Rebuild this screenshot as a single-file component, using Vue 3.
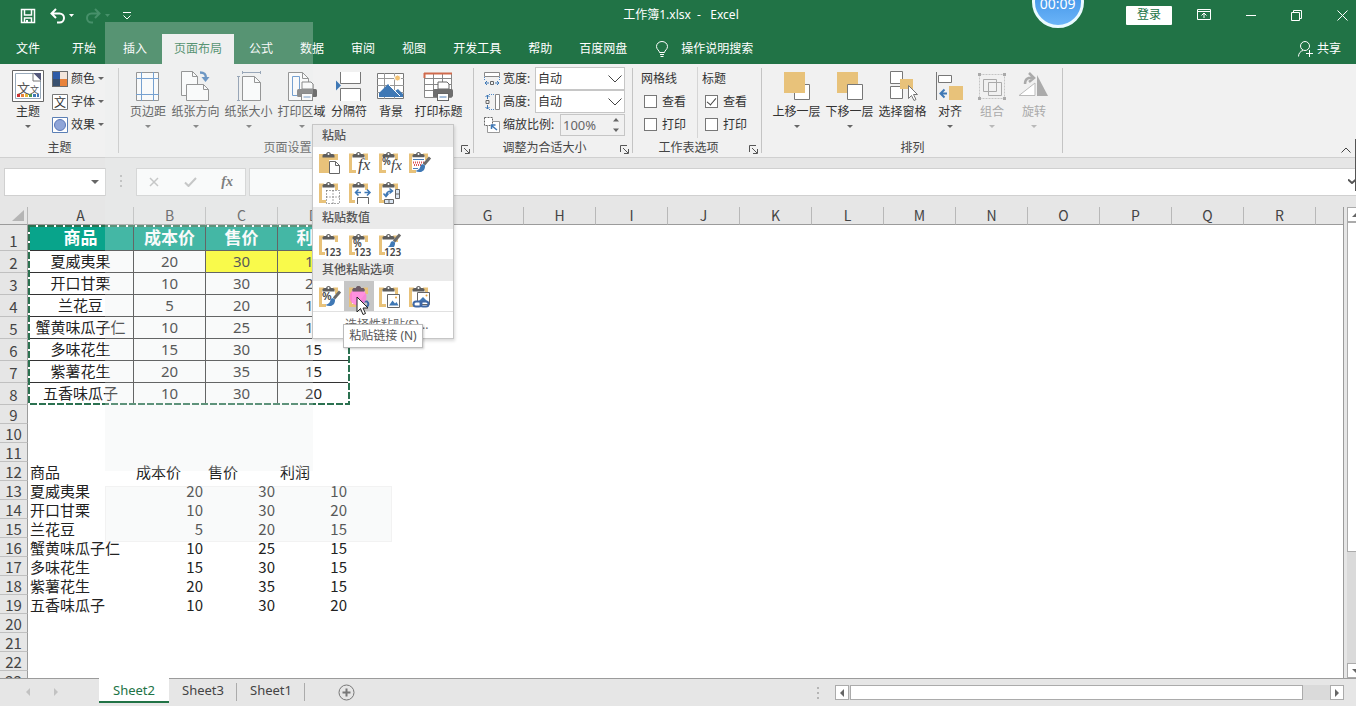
<script setup>
import { ref } from 'vue'

const clip =
  '<path d="M7 5H3.5v16.500H9M16 5h3.500v5" stroke="#e8c27a" stroke-width="3" fill="none"/><path d="M5 6.500h13V10l-8 10H5z" fill="#fff"/><path d="M5.500 7.500V5.500q0-1.500 2-1.500h1.500a2.600 2.600 0 0 1 5 0h1.500q2 0 2 1.500v2z" fill="#5d5d5d"/><circle cx="11.500" cy="4" r="1" fill="#fff"/>'
const brush =
  '<path d="M23 7.500l-6 7" stroke="#6b6b6b" stroke-width="3"/><path d="M18 15.500c-1.500-2-4-1.500-4.500.5s-1.500 4-5 5c4.500 2.500 10 .5 9.500-5.500z" fill="#3f78b5"/>'
const nums = '<rect x="8" y="15" width="17" height="9" fill="#fff"/><text x="7" y="24" font-size="10" font-weight="600" fill="#444" font-family="Noto Sans, sans-serif">123</text>'
const fx = (x, s) => `<text x="${x}" y="20" font-size="${s}" font-style="italic" fill="#444" font-family="Liberation Serif, serif">fx</text>`

const pasteSections = [
  {
    title: '粘贴',
    rows: [
      [
        { name: '粘贴', art: '<path d="M2 4h19v6H12v13H2z" fill="#e8c27a"/><path d="M5.500 7.500V5.500q0-1.500 2-1.500h1.500a2.600 2.600 0 0 1 5 0h1.500q2 0 2 1.500v2z" fill="#5d5d5d"/><circle cx="11.500" cy="4" r="1" fill="#fff"/><path d="M12.500 11.500h6l4 4v8h-10z" fill="#fff" stroke="#666"/><path d="M18.500 11.500v4h4" fill="none" stroke="#666"/>' },
        { name: '公式', art: clip + fx(11, 17) },
        { name: '公式和数字格式', art: clip + fx(14, 15) + '<text x="5" y="15" font-size="10" font-weight="600" fill="#444" font-family="Noto Sans, sans-serif">%</text>' },
        { name: '保留源格式', art: clip + '<path d="M5 7.500h13v12H5z" fill="#fff"/><path d="M6 9.500h11M6 18.500h5" stroke="#4c7fb8"/><path d="M6 12.500h11M7 15h8" stroke="#d55" stroke-width="2" stroke-dasharray="1 1"/>' + brush }
      ],
      [
        { name: '无边框', art: clip + '<path d="M9.500 10.500h13v13h-13zM9.500 17h13M16 10.500v13" fill="#fff" stroke="#555" stroke-dasharray="1 2"/>' },
        { name: '保留源列宽', art: clip + '<path d="M8 10h16v14H8z" fill="#fff"/><path d="M10.500 24v-6.500h11V24" fill="none" stroke="#666"/><path d="M9 12.500h5M22.500 12.500h-5M11.500 9.500l-3 3 3 3M20 9.500l3 3-3 3" fill="none" stroke="#3f78b5" stroke-width="1.500"/>' },
        { name: '转置', art: clip + '<path d="M8 9h16v15H8z" fill="#fff"/><path d="M18.500 9.500h4v9h-4zM18.500 14h4M7.500 19.500h9v4h-9zM12 19.500v4" fill="#dbe6f2" stroke="#666"/><path d="M9 16c0-4 2-5 6-5M12.500 8.500l3 2.500-3 2.500M6.500 13.500l2.500 3 2.500-3" fill="none" stroke="#3f78b5" stroke-width="1.500"/>' }
      ]
    ]
  },
  {
    title: '粘贴数值',
    rows: [
      [
        { name: '值', art: clip + nums },
        { name: '值和数字格式', art: clip + '<text x="6" y="15" font-size="10" font-weight="600" fill="#444" font-family="Noto Sans, sans-serif">%</text>' + nums },
        { name: '值和源格式', art: clip + '<g transform="translate(0 -5)">' + brush + '</g>' + nums }
      ]
    ]
  },
  {
    title: '其他粘贴选项',
    rows: [
      [
        { name: '格式', art: clip + '<text x="5" y="16" font-size="11" font-weight="600" fill="#444" font-family="Noto Sans, sans-serif">%</text>' + brush },
        { name: '粘贴链接', active: true, art: clip + '<path d="M12 17.500h8a3 3 0 0 1 0 5h-8" fill="none" stroke="#3f68a5" stroke-width="2"/><circle cx="11" cy="13" r="8.500" fill="#ff7ddb" fill-opacity=".85"/><path d="M5.500 7.500V5.500q0-1.500 2-1.500h1.500a2.600 2.600 0 0 1 5 0h1.500q2 0 2 1.500v2z" fill="#6d5a66"/>' },
        { name: '图片', art: clip + '<path d="M10.500 10.500h12v13h-12z" fill="#fff" stroke="#666"/><path d="M12 21.500l3.500-5 2.500 3 1.500-1.500 2 3.500z" fill="#3f78b5"/><circle cx="19" cy="13.500" r="1" fill="#e8a33a"/>' },
        { name: '链接的图片', art: clip + '<path d="M10.500 8.500h12v12h-12z" fill="#fff" stroke="#666"/><path d="M12 17l4-4 5 5" fill="#3f78b5"/><circle cx="19.500" cy="11.500" r="1" fill="#e8a33a"/><rect x="6.500" y="17.500" width="8" height="5" rx="2.500" fill="#fff" stroke="#3f68a5" stroke-width="2"/><rect x="13.500" y="17.500" width="8" height="5" rx="2.500" fill="none" stroke="#3f68a5" stroke-width="2"/>' }
      ]
    ]
  }
]

const printer = (x, y) =>
  `<g transform="translate(${x} ${y})"><path d="M5 0h9l2 2v5H5z" fill="#fff" stroke="#666"/><rect x="0" y="7" width="20" height="8" rx="1.500" fill="#6e6e6e"/><rect x="4.500" y="11.500" width="11" height="7" fill="#fff" stroke="#666"/><path d="M6.500 15h7" stroke="#4c7fb8"/></g>`

const pageSetup = [
  { label: '页边距', caret: true, art: '<path d="M4.500 2.500h22v28h-22z" fill="#fff" stroke="#777"/><path d="M9.500 2v29M21.500 2v29M4 8.500h23M4 24.500h23" stroke="#4c86c6"/>' },
  { label: '纸张方向', caret: true, art: '<path d="M1.500 1.500h11l5 5v19h-16z" fill="#fff" stroke="#777"/><path d="M12.500 1.500v5h5" fill="none" stroke="#777"/><path d="M6.500 14.500h17l5 5v11h-22z" fill="#fff" stroke="#777"/><path d="M23.500 14.500v5h5" fill="none" stroke="#777"/><path d="M20 2.500c5 0 6 2 6 6" fill="none" stroke="#3f78b5" stroke-width="2.500"/><path d="M21.500 7h8l-4 5z" fill="#3f78b5"/>' },
  { label: '纸张大小', caret: true, art: '<path d="M9.500 6.500h12l6 6v18h-18z" fill="#fff" stroke="#777"/><path d="M21.500 6.500v6h6" fill="none" stroke="#777"/><path d="M9 2.500h19M9.500 1v3M27.500 1v3M5.500 6v25M4 6.500h3M4 30.500h3" stroke="#7a8ca3"/>' },
  { label: '打印区域', caret: true, art: '<path d="M2.500 2.500h14l6 6v22h-20z" fill="#fff" stroke="#777"/><path d="M16.500 2.500v6h6" fill="none" stroke="#777"/><path d="M6.500 6.500h7v19h-7z" fill="none" stroke="#4c86c6"/>' + printer(11, 12) },
  { label: '分隔符', art: '<path d="M7.500 2v11.500h20V2M7.500 31V18.500h20V31" fill="#fff" stroke="#777"/><path d="M3 10.500l5 5-5 5z" fill="#3f78b5"/>' },
  { label: '背景', art: '<path d="M2.500 3.500h26v25h-26z" fill="#fff" stroke="#777"/><path d="M2 8.500h27M2 15.500h27M2 22.500h27M9.500 3v26M19.500 3v26" stroke="#999"/><path d="M4 27v-4l9-9 7 7 3-2 5 5v3z" fill="#3f78b5"/><path d="M14 15l11 11" stroke="#fff"/><circle cx="22.500" cy="8" r="3" fill="#f2c274" stroke="#fff"/>' },
  { label: '打印标题', art: '<path d="M1.500 3.500h27v24h-27z" fill="#fff" stroke="#888"/><path d="M1 8.500h28M10.500 3v25M19.500 3v25M1 14.500h28M1 20.500h28" stroke="#888"/><path d="M1 3.500h28M1.500 8V3" stroke="#d06a4c" stroke-width="2"/>' + printer(10, 12) }
]

const arrange = [
  { label: '上移一层', caret: true, art: '<path d="M13.500 14.500h15v15h-15z" fill="#fff" stroke="#777"/><path d="M3 2h21v21H3z" fill="#e8c27a"/>' },
  { label: '下移一层', caret: true, art: '<path d="M3 2h21v21H3z" fill="#e8c27a"/><path d="M13.500 14.500h15v15h-15z" fill="#fff" stroke="#777"/>' },
  { label: '选择窗格', art: '<path d="M3.500 1.500h12v12h-12zM3.500 16.500h12v12h-12z" fill="#fff" stroke="#777"/><path d="M13 9h13v10H13z" fill="#e8c27a"/><path d="M21.500 15.500v13l3-3 2.500 5 2-1-2.500-5h4z" fill="#fff" stroke="#777"/>' },
  { label: '对齐', caret: true, art: '<path d="M2.500 2v28" stroke="#777"/><path d="M4.500 5.500h13v7h-13z" fill="#fff" stroke="#777"/><path d="M15 16h14v14H15z" fill="#e8c27a"/><path d="M13 23.500H7M10.500 19.500l-4 4 4 4" fill="none" stroke="#3f78b5" stroke-width="2"/>' },
  { label: '组合', caret: true, disabled: true, art: '<path d="M3.500 4.500h25v24h-25z" fill="none" stroke="#c5c5c5" stroke-dasharray="2 1"/><path d="M7.500 9.500h13v12h-13zM12.500 12.500h13v13h-13z" fill="none" stroke="#aaa"/><path d="M2 3h3v3H2zM27 3h3v3h-3zM2 27h3v3H2zM27 27h3v3h-3z" fill="#aaa"/>' },
  { label: '旋转', caret: true, disabled: true, art: '<path d="M1 25.500h16V13z" fill="#fff" stroke="#bbb"/><path d="M19 5l11 21H19z" fill="#ababab"/><path d="M7 14c0-5 3-7 8-6M11 3l5 5-5 4" fill="none" stroke="#aaa" stroke-width="2.500"/>' }
]

const tabs = ['插入', '页面布局', '公式', '数据', '审阅', '视图', '开发工具', '帮助', '百度网盘']

const themeItems = [
  { label: '颜色', art: '<path d="M0 0h16v16H0z" fill="#6d6d6d"/><path d="M1 1h7v7H1z" fill="#2f5ca8"/><path d="M8 1h7v7H8z" fill="#f3e6dc"/><path d="M1 8h7v7H1z" fill="#39506f"/><path d="M8 8h7v7H8z" fill="#e8823a"/>' },
  { label: '字体', art: '<path d="M.5 .5h15v15H.5z" fill="#fff" stroke="#777"/><text x="2" y="13" font-size="12" fill="#333" font-family="Noto Sans CJK SC, sans-serif">文</text>' },
  { label: '效果', art: '<path d="M.5 .5h15v15H.5z" fill="#fff" stroke="#5b7fb5"/><circle cx="8" cy="8" r="5.500" fill="#8fa5d8" stroke="#5b78b8"/>' }
]

const scaleRows = [
  { id: 'w', label: '宽度:', art: '<path d="M.5 1.500h15v4H.5z" fill="#fff" stroke="#888"/><path d="M.5 6v4M15.500 6v4" stroke="#4c86c6" stroke-dasharray="1 1"/><path d="M6.500 10.500h3v3h-3z" fill="none" stroke="#666"/><path d="M5 12H1M3 10l-2 2 2 2M11 12h4M13 10l2 2-2 2" fill="none" stroke="#3f78b5"/>' },
  { id: 'h', label: '高度:', art: '<path d="M11.500 .5h4v15h-4z" fill="#fff" stroke="#888"/><path d="M5 .5h6M5 15.500h6" stroke="#4c86c6" stroke-dasharray="1 1"/><path d="M2 6.500h3v3H2z" fill="none" stroke="#666"/><path d="M3.500 5V1M1.500 3l2-2 2 2M3.500 11v4M1.500 13l2 2 2-2" fill="none" stroke="#3f78b5"/>' }
]
const scaleArt = '<path d="M3.500 4.500V15.500H15.500V4.500H9" fill="#fff" stroke="#999"/><path d="M.5 .5h8v8h-8z" fill="#fff" stroke="#666" stroke-dasharray="2 1"/><path d="M13 13L7.500 8.500M7.500 12V8h4" fill="none" stroke="#3f78b5" stroke-width="1.500"/>'

const checks = ref([
  { title: '网格线', items: [{ id: 'gv', label: '查看', on: false }, { id: 'gp', label: '打印', on: false }] },
  { title: '标题', items: [{ id: 'hv', label: '查看', on: true }, { id: 'hp', label: '打印', on: false }] }
])

const columns = 'ABCDEFGHIJKLMNOPQRS'.split('')
const products = [
  ['夏威夷果', 20, 30, 10],
  ['开口甘栗', 10, 30, 20],
  ['兰花豆', 5, 20, 15],
  ['蟹黄味瓜子仁', 10, 25, 15],
  ['多味花生', 15, 30, 15],
  ['紫薯花生', 20, 35, 15],
  ['五香味瓜子', 10, 30, 20]
]
const head = ['商品', '成本价', '售价', '利润']
const rows = Array.from({ length: 23 }, (_, i) => {
  const n = i + 1
  if (n === 1) return { n, kind: 'head', cells: head }
  if (n <= 8) return { n, kind: 'boxed', cells: products[n - 2] }
  if (n === 12) return { n, kind: 'plain', cells: head }
  if (n >= 13 && n <= 19) return { n, kind: 'plain', cells: products[n - 13] }
  return { n, kind: 'plain', cells: ['', '', '', ''] }
})
const zoomValue = ref('100%')
</script>

<template>
  <div class="app">
    <header class="titlebar">
      <div class="quick">
        <button aria-label="保存"><svg width="16" height="16" viewBox="0 0 16 16"><path d="M1.500 1.500h13v13h-13zM4.500 2v5h7V2M4.500 14v-4h7v4" fill="none" stroke="#fff" stroke-width="1.500" /><path d="M6 12h2v3H6z" fill="#fff" /></svg></button>
        <button aria-label="撤销" class="undo"><svg width="24" height="16" viewBox="0 0 24 16"><path d="M1.500 5.500h8a4.500 4.500 0 0 1 0 9H7M6 1L1.500 5.500 6 10" fill="none" stroke="#fff" stroke-width="2" /><path d="M19 6h5l-2.500 3z" fill="#fff" /></svg></button>
        <button aria-label="恢复" class="redo"><svg width="24" height="16" viewBox="0 0 24 16"><path d="M13.500 5.500h-8a4.500 4.500 0 0 0 0 9H7M9 1l4.500 4.500L9 10" fill="none" stroke="#47906a" stroke-width="2" /><path d="M19 6h5l-2.500 3z" fill="#47906a" /></svg></button>
        <button aria-label="自定义快速访问工具栏"><svg width="10" height="10" viewBox="0 0 10 10"><path d="M1 1.500h8M1.500 4.500L5 8l3.500-3.500" fill="none" stroke="#fff" /></svg></button>
      </div>
      <div class="doc">工作簿1.xlsx&nbsp; -&nbsp;&nbsp; Excel</div>
      <div class="window">
        <button class="login">登录</button>
        <button aria-label="功能区显示选项"><svg width="14" height="12" viewBox="0 0 14 12"><path d="M.5 .5h13v10H.5zM.5 2.500h13M7 9V4.500M4.500 6.500L7 4l2.500 2.500" fill="none" stroke="#fff" /></svg></button>
        <button aria-label="最小化"><svg width="10" height="10" viewBox="0 0 10 10"><path d="M0 5.500h10" stroke="#fff" /></svg></button>
        <button aria-label="还原"><svg width="11" height="11" viewBox="0 0 11 11"><path d="M.5 2.500h8v8h-8zM2.500 2V.5h8v8H9" fill="none" stroke="#fff" /></svg></button>
        <button aria-label="关闭"><svg width="11" height="11" viewBox="0 0 11 11"><path d="M.5 .5l10 10M10.500 .5l-10 10" fill="none" stroke="#fff" /></svg></button>
      </div>
      <div class="timer">00:09</div>
    </header>

    <nav class="tabs">
      <button class="file">文件</button>
      <button class="home">开始</button>
      <button v-for="t in tabs" :key="t" :class="{ on: t === '页面布局' }">{{ t }}</button>
      <button class="tell">
        <svg width="12" height="17" viewBox="0 0 12 17"><path d="M3.500 11.500c0-2-3-3-3-6a5.500 5 0 0 1 11 0c0 3-3 4-3 6zM4 13.500h4M4.500 15.500h3" fill="none" stroke="#fff" /></svg>
        操作说明搜索
      </button>
      <button class="share">
        <svg width="15" height="16" viewBox="0 0 15 16"><circle cx="7" cy="5" r="4.500" fill="none" stroke="#fff" /><path d="M.5 15.500c0-3 2-5.500 4.500-6M8 12.500h7M11.500 9v7" fill="none" stroke="#fff" /></svg>
        共享
      </button>
    </nav>

    <section class="ribbon">
      <div class="group theme">
        <div class="body">
          <button class="big narrow">
            <svg width="32" height="32" viewBox="0 0 32 32"><path d="M.5 .5h31v31H.5z" fill="#fff" stroke="#666" /><path d="M3.500 3.500h25v25h-25z" fill="#fff" stroke="#9ab" /><path d="M21 3h8v8z" fill="#55597c" /><path d="M21 3v8h8" fill="#fff" stroke="#777" /><text x="5" y="23" font-size="13" fill="#555" font-family="Noto Sans CJK SC, sans-serif">文</text><text x="18" y="23" font-size="9" fill="#555" font-family="Noto Sans CJK SC, sans-serif">文</text><path d="M5 25.500h3" stroke="#c33" stroke-width="3" /><path d="M9 25.500h3" stroke="#e8823a" stroke-width="3" /><path d="M13 25.500h3" stroke="#e6b93a" stroke-width="3" /><path d="M17 25.500h3" stroke="#4a9a55" stroke-width="3" /><path d="M21 25.500h6" stroke="#3f78b5" stroke-width="3" stroke-dasharray="3 1" /></svg>
            <span>主题</span><i class="caret"></i>
          </button>
          <div class="stack">
            <button v-for="t in themeItems" :key="t.label"><svg width="16" height="16" viewBox="0 0 16 16" v-html="t.art"></svg>{{ t.label }}<i class="caret"></i></button>
          </div>
        </div>
        <footer><span>主题</span></footer>
      </div>

      <div class="group page">
        <div class="body">
          <button v-for="b in pageSetup" :key="b.label" class="big" :class="{ wide: b.label.length > 3 }">
            <svg width="32" height="32" viewBox="0 0 32 32" v-html="b.art"></svg>
            <span>{{ b.label }}</span><i v-if="b.caret" class="caret"></i>
          </button>
        </div>
        <footer class="more"><span>页面设置</span><button class="launch" aria-label="页面设置选项"><svg width="9" height="9" viewBox="0 0 9 9"><path d="M.5 7V.5H7M3 3l5 5M8.500 4v4.500H4" fill="none" stroke="#555" /></svg></button></footer>
      </div>

      <div class="group scale">
        <div class="lines">
          <div v-for="r in scaleRows" :key="r.id" class="line">
            <svg width="16" height="16" viewBox="0 0 16 16" v-html="r.art"></svg>
            <label :for="r.id">{{ r.label }}</label>
            <div class="pick">
              <select :id="r.id"><option>自动</option></select>
              <svg width="14" height="8" viewBox="0 0 14 8"><path d="M.5 .5L7 7 13.500 .5" fill="none" stroke="#444" /></svg>
            </div>
          </div>
          <div class="line">
            <svg width="16" height="16" viewBox="0 0 16 16" v-html="scaleArt"></svg>
            <label for="zoom">缩放比例:</label>
            <div class="spin">
              <input id="zoom" v-model="zoomValue" type="text" />
              <svg width="6" height="14" viewBox="0 0 6 14"><path d="M0 3.500L3 0l3 3.500zM0 10.500L3 14l3-3.500z" fill="#666" /></svg>
            </div>
          </div>
        </div>
        <footer class="more"><span>调整为合适大小</span><button class="launch" aria-label="调整选项"><svg width="9" height="9" viewBox="0 0 9 9"><path d="M.5 7V.5H7M3 3l5 5M8.500 4v4.500H4" fill="none" stroke="#555" /></svg></button></footer>
      </div>

      <div class="group opts">
        <div class="body">
          <div v-for="c in checks" :key="c.title" class="checkcol">
            <span>{{ c.title }}</span>
            <label v-for="k in c.items" :key="k.id" :for="k.id"><input :id="k.id" v-model="k.on" type="checkbox" />{{ k.label }}</label>
          </div>
        </div>
        <footer class="more"><span>工作表选项</span><button class="launch" aria-label="工作表选项设置"><svg width="9" height="9" viewBox="0 0 9 9"><path d="M.5 7V.5H7M3 3l5 5M8.500 4v4.500H4" fill="none" stroke="#555" /></svg></button></footer>
      </div>

      <div class="group arrange">
        <div class="body">
          <button v-for="b in arrange" :key="b.label" class="big" :class="{ wide: b.label.length > 3 }" :disabled="b.disabled">
            <svg width="32" height="32" viewBox="0 0 32 32" v-html="b.art"></svg>
            <span>{{ b.label }}</span><i v-if="b.caret" class="caret"></i>
          </button>
        </div>
        <footer><span>排列</span></footer>
      </div>
      <button class="collapse" aria-label="折叠功能区"><svg width="10" height="6" viewBox="0 0 10 6"><path d="M.5 5.500L5 1l4.500 4.500" fill="none" stroke="#444" /></svg></button>
    </section>

    <section class="formula">
      <div class="namebox"><input type="text" aria-label="名称框" /><i class="caret"></i></div>
      <svg class="grip" width="2" height="13" viewBox="0 0 2 13"><path d="M1 0v13" stroke="#b5b5b5" stroke-width="2" stroke-dasharray="2 3" /></svg>
      <div class="fxbox">
        <button aria-label="取消"><svg width="10" height="10" viewBox="0 0 10 10"><path d="M1 1l8 8M9 1L1 9" stroke="#b9b9b9" stroke-width="1.500" /></svg></button>
        <button aria-label="输入"><svg width="13" height="10" viewBox="0 0 13 10"><path d="M1 5.500L4.500 9 12 1" fill="none" stroke="#b9b9b9" stroke-width="2" /></svg></button>
        <button aria-label="插入函数" class="fn">fx</button>
      </div>
      <div class="entry"><input type="text" aria-label="编辑栏" /><svg width="8" height="5" viewBox="0 0 8 5"><path d="M0 .5L4 4 8 .5" fill="none" stroke="#555" stroke-width="2" /></svg></div>
    </section>

    <main class="work">
      <div class="sheet">
        <table>
          <colgroup>
            <col class="c-num" /><col class="c-a" /><col /><col /><col /><col class="c-e" /><col v-for="n in 13" :key="n" /><col class="c-rest" />
          </colgroup>
          <thead>
            <tr>
              <th class="corner"><svg width="12" height="11" viewBox="0 0 12 11"><path d="M12 0v11H0z" fill="#b5b5b5" /></svg></th>
              <th v-for="(c, i) in columns" :key="c">{{ i < 18 && c !== 'E' ? c : '' }}</th>
            </tr>
          </thead>
          <tbody>
            <tr v-for="r in rows" :key="r.n" :class="r.kind">
              <th>{{ r.n }}</th>
              <td v-for="(v, i) in r.cells" :key="i" :class="{ hot: r.n === 2 && i > 1, num: typeof v === 'number' }">{{ v }}</td>
              <td colspan="15" class="blank"></td>
            </tr>
          </tbody>
        </table>
        <svg class="ants" width="322" height="181" viewBox="0 0 322 181"><path d="M1 1h320v178H1z" fill="none" stroke="#fff" stroke-width="2" /><path d="M1 1h320v178H1z" fill="none" stroke="#2b7150" stroke-width="2" stroke-dasharray="7 2" /></svg>
      </div>
      <div class="vbar">
        <button aria-label="向上滚动"><i class="tri up"></i></button>
        <div class="vthumb"></div>
        <button class="down" aria-label="向下滚动"><i class="tri dn"></i></button>
      </div>
    </main>

    <footer class="bottom">
      <button class="nav" aria-label="上一个工作表"><i class="tri lf pale"></i></button>
      <button class="nav" aria-label="下一个工作表"><i class="tri rt pale"></i></button>
      <div class="sheets">
        <button class="on">Sheet2</button><button>Sheet3</button><button>Sheet1</button>
      </div>
      <button class="add" aria-label="新工作表"><svg width="17" height="17" viewBox="0 0 17 17"><circle cx="8.500" cy="8.500" r="7.500" fill="none" stroke="#777" /><path d="M4.500 8.500h8M8.500 4.500v8" stroke="#777" stroke-width="2" /></svg></button>
      <svg class="grip end" width="2" height="12" viewBox="0 0 2 12"><path d="M1 0v12" stroke="#b5b5b5" stroke-width="2" stroke-dasharray="2 3" /></svg>
      <div class="hbar">
        <button aria-label="向左滚动"><i class="tri lf"></i></button>
        <div class="hthumb"></div>
        <button class="right" aria-label="向右滚动"><i class="tri rt"></i></button>
      </div>
    </footer>

    <div class="veil tall"></div>
    <div class="veil low"></div>
    <div class="edge"></div>

    <div class="menu">
      <template v-for="s in pasteSections" :key="s.title">
        <h4>{{ s.title }}</h4>
        <div v-for="(row, i) in s.rows" :key="i" class="mrow">
          <button v-for="b in row" :key="b.name" :aria-label="b.name" :class="{ active: b.active }"><svg width="25" height="25" viewBox="0 0 25 25" v-html="b.art"></svg></button>
        </div>
      </template>
      <button class="special">选择性粘贴(S)...</button>
      <div class="tip">粘贴链接 (N)</div>
      <svg class="pointer" width="13" height="20" viewBox="0 0 13 20"><path d="M1 1v15l3.500-3.500L7 18.500l2.500-1L7 12h5z" fill="#fff" stroke="#222" /></svg>
    </div>
  </div>
</template>

<style>
body {
  background: #e6e6e6;
}
</style>

<style scoped>
.app {
  position: relative;
  display: flex;
  flex-direction: column;
  height: 100vh;
  overflow: hidden;
  font: 12px/16px "Noto Sans", "Noto Sans CJK SC", sans-serif;
  color: #333;
  background: #e6e6e6;
}
.app * {
  box-sizing: border-box;
}
button, input, select {
  font: inherit;
  color: inherit;
  border: 0;
  padding: 0;
  margin: 0;
  background: none;
  border-radius: 0;
}
svg {
  display: block;
  flex: none;
}
.titlebar {
  position: relative;
  display: flex;
  align-items: center;
  height: 32px;
  flex: none;
  background: #217346;
  color: #fff;
}
.quick, .window {
  flex: 1;
  display: flex;
  align-items: center;
}
.quick {
  padding-left: 20px;
  gap: 12px;
}
.quick .undo {
  margin-left: 2px;
}
.doc {
  padding: 0 6px 2px 0;
}
.window {
  justify-content: flex-end;
  gap: 35px;
  padding: 0 8px 2px 0;
}
.login {
  width: 46px;
  height: 19px;
  background: #fff;
  color: #217346;
  border-radius: 1px;
  margin-right: -10px;
}
.timer {
  position: absolute;
  left: 78%;
  margin-left: -26px;
  top: -24px;
  width: 52px;
  height: 52px;
  padding-top: 17px;
  border: 3px solid #eafaff;
  border-radius: 50%;
  background: linear-gradient(#2f86e0, #6bb4f8);
  font-size: 14px;
  line-height: 16px;
  text-align: center;
}
.tabs {
  display: flex;
  align-items: stretch;
  gap: 3px;
  height: 32px;
  flex: none;
  padding: 2px 15px 0 4px;
  background: #217346;
  color: #fff;
}
.tabs button {
  display: flex;
  align-items: center;
  padding: 0 12px;
}
.tabs .home {
  margin-left: 5px;
}
.tabs .on {
  background: #f1f1f1;
  color: #217346;
}
.tabs .tell {
  gap: 13px;
  margin-left: 2px;
}
.tabs .share {
  margin-left: auto;
  gap: 4px;
  padding-right: 0;
}
.ribbon {
  display: flex;
  height: 94px;
  flex: none;
  background: #f1f1f1;
  border-bottom: 1px solid #d0d0d0;
}
.group {
  display: flex;
  flex-direction: column;
  flex: none;
  position: relative;
  padding-top: 3px;
}
.group::after {
  content: "";
  position: absolute;
  right: 0;
  top: 4px;
  bottom: 4px;
  width: 1px;
  background: #c4c4c4;
}
.theme { width: 119px; }
.page { width: 355px; }
.scale { width: 159px; }
.opts { width: 129px; }
.arrange { width: 301px; }
.body {
  display: flex;
  height: 71px;
}
.page .body, .arrange .body, .theme .body {
  padding-left: 8px;
}
.group > footer {
  display: flex;
  align-items: center;
  height: 19px;
  padding: 0 4px;
  color: #444;
}
.group > footer span {
  flex: 1;
  text-align: center;
}
.group > .more span {
  padding-right: 9px;
}
.launch svg {
  margin-top: 3px;
}
.big {
  display: flex;
  flex-direction: column;
  align-items: center;
  width: 42px;
  padding-top: 3px;
  white-space: nowrap;
}
.big.wide { width: 53px; }
.big.narrow { width: 40px; }
.big span {
  margin-top: 2px;
}
.big .caret {
  margin-top: 5px;
}
.big:disabled {
  color: #aaa;
}
.big:disabled .caret {
  opacity: .4;
}
.caret {
  border: 3px solid transparent;
  border-top-color: #666;
  border-bottom: 0;
  flex: none;
}
.stack {
  padding-left: 4px;
}
.stack button {
  display: flex;
  align-items: center;
  gap: 3px;
  height: 23px;
}
.lines {
  height: 71px;
  padding: 0 8px 0 10px;
}
.line {
  display: flex;
  align-items: center;
  gap: 3px;
  height: 23px;
}
.line label {
  white-space: nowrap;
}
.pick {
  display: grid;
  align-items: center;
  width: 90px;
  height: 23px;
  margin-left: auto;
  border: 1px solid #c6c6c6;
  background: #fff;
}
.pick select {
  grid-area: 1 / 1;
  width: 100%;
  padding-left: 2px;
  appearance: none;
  outline: 0;
}
.pick svg {
  grid-area: 1 / 1;
  justify-self: end;
  margin-right: 2px;
  pointer-events: none;
}
.spin {
  display: flex;
  align-items: center;
  width: 65px;
  height: 22px;
  margin-left: auto;
  padding-right: 5px;
  border: 1px solid #c6c6c6;
  color: #666;
}
.spin input {
  flex: 1;
  min-width: 0;
  padding-left: 2px;
  font-size: 13px;
}
.checkcol {
  display: flex;
  flex-direction: column;
  width: 64px;
  padding-left: 8px;
  white-space: nowrap;
}
.checkcol + .checkcol {
  padding-left: 4px;
  border-left: 1px solid #d5d5d5;
}
.checkcol span, .checkcol label {
  display: flex;
  align-items: center;
  height: 23px;
}
.checkcol label {
  padding-left: 3px;
}
.checkcol input {
  display: grid;
  place-items: center;
  appearance: none;
  width: 13px;
  height: 13px;
  margin-right: 5px;
  border: 1px solid #777;
  background: #fff;
}
.checkcol input:checked::after {
  content: "";
  width: 4px;
  height: 8px;
  margin-bottom: 2px;
  border: solid #444;
  border-width: 0 1px 1px 0;
  transform: rotate(40deg);
}
.collapse {
  align-self: flex-end;
  margin: 0 5px 4px auto;
}
.formula {
  display: flex;
  align-items: center;
  height: 49px;
  flex: none;
  padding: 0 0 2px 4px;
}
.namebox, .fxbox, .entry {
  display: flex;
  align-items: center;
  height: 28px;
  background: #fff;
  border: 1px solid #d0d0d0;
}
.namebox {
  width: 102px;
  padding-right: 6px;
}
.namebox input, .entry input {
  flex: 1;
  min-width: 0;
  outline: 0;
}
.namebox .caret {
  border-width: 4px 4px 0;
}
.formula .grip {
  margin: 0 14px;
}
.fxbox {
  justify-content: space-between;
  width: 110px;
  margin-right: 3px;
  padding: 0 12px;
}
.fn {
  font: italic bold 14px/20px "Liberation Serif", serif;
  color: #555;
}
.entry {
  flex: 1;
  border-right: 0;
}
.work {
  display: flex;
  flex: 1;
  min-height: 0;
}
.sheet {
  position: relative;
  flex: 1;
  min-width: 0;
  overflow: hidden;
  border-right: 1px solid #9b9b9b;
  background: #fff;
}
table {
  table-layout: fixed;
  width: 100%;
  border-collapse: separate;
  border-spacing: 0;
}
col { width: 72px; }
.c-num { width: 28px; }
.c-a { width: 106px; }
.c-e { width: 30px; }
.c-rest { width: auto; }
th, td {
  padding: 0;
  white-space: nowrap;
}
th {
  font: 15px/17px "Noto Sans CJK SC", sans-serif;
  color: #444;
  background: #e6e6e6;
}
thead th {
  height: 18px;
  font-size: 14px;
  border-bottom: 1px solid #9b9b9b;
  border-right: 1px solid #b8b8b8;
}
thead th:last-child {
  border-right: 0;
}
.corner svg {
  margin-left: 12px;
}
tbody th {
  height: 19px;
  border-right: 1px solid #9b9b9b;
  border-bottom: 1px solid #c0c0c0;
}
tbody td {
  height: 19px;
  padding: 0 2px;
  font: 15px/18px "Noto Sans CJK SC", sans-serif;
  color: #222;
}
.plain .num {
  text-align: right;
  padding-right: 3px;
}
.boxed th, .boxed td {
  height: 22px;
}
.head th, .head td {
  height: 26px;
}
.head th {
  padding-top: 6px;
}
.boxed th {
  padding-top: 2px;
}
.boxed td:not(.blank), .head td:not(.blank) {
  text-align: center;
  border-right: 1px solid #333;
  border-bottom: 1px solid #333;
  font-family: "Noto Sans", "Noto Sans CJK SC", sans-serif;
}
.boxed td:not(.blank) {
  padding-bottom: 2px;
}
.head td:not(.blank) {
  background: #08a48b;
  color: #fff;
  font-size: 17px;
  line-height: 22px;
  font-weight: 700;
}
.boxed .hot {
  background: #ffff10;
}
.ants {
  position: absolute;
  left: 28px;
  top: 18px;
}
.vbar {
  display: flex;
  flex-direction: column;
  width: 17px;
  margin-left: 3px;
  margin-right: -8px;
  background: #dadada;
}
.vbar button, .hbar button {
  flex: none;
  display: grid;
  place-items: center;
  background: #fff;
  border: 1px solid #ababab;
}
.vbar button {
  height: 15px;
}
.vthumb {
  height: 70%;
  background: #fff;
  border: 1px solid #ababab;
}
.vbar .down {
  margin-top: auto;
}
.tri {
  border: 4px solid transparent;
}
.up { border-top: 0; border-bottom-color: #666; }
.dn { border-bottom: 0; border-top-color: #666; }
.lf { border-left: 0; border-right-color: #666; }
.rt { border-right: 0; border-left-color: #666; }
.lf.pale { border-right-color: #c2c2c2; }
.rt.pale { border-left-color: #c2c2c2; }
.bottom {
  display: flex;
  align-items: flex-start;
  height: 28px;
  flex: none;
  padding-right: 12px;
  border-top: 1px solid #9b9b9b;
}
.nav {
  width: 28px;
  height: 26px;
  display: grid;
  place-items: center;
}
.nav:first-child {
  margin-left: 14px;
}
.sheets {
  display: flex;
  margin-left: 29px;
  margin-top: -1px;
  font-size: 13px;
  line-height: 24px;
}
.sheets button {
  position: relative;
  width: 68px;
  height: 25px;
  padding-bottom: 1px;
  color: #444;
}
.sheets button + button::after {
  content: "";
  position: absolute;
  right: 0;
  top: 5px;
  width: 1px;
  height: 18px;
  background: #ababab;
}
.sheets .on {
  width: 70px;
  background: #fff;
  color: #217346;
  border-bottom: 2px solid #217346;
}
.add {
  margin: 5px 0 0 33px;
}
.grip.end {
  margin: 8px 16px 0 auto;
}
.hbar {
  display: flex;
  width: 509px;
  height: 15px;
  margin-top: 6px;
  background: #dadada;
}
.hbar button {
  width: 14px;
}
.hthumb {
  width: 453px;
  margin-left: 1px;
  background: #fff;
  border: 1px solid #ababab;
}
.hbar .right {
  margin-left: auto;
}
.veil {
  position: absolute;
  background: rgba(232, 236, 236, .27);
  pointer-events: none;
}
.tall {
  left: 105px;
  top: 22px;
  width: 208px;
  height: 449px;
}
.low {
  left: 105px;
  top: 486px;
  width: 287px;
  height: 56px;
  box-shadow: inset 0 0 0 1px rgba(200, 204, 204, .15);
}
.edge {
  position: absolute;
  right: 0;
  top: 139px;
  width: 1px;
  height: 52px;
  background: #555;
}
.menu {
  position: absolute;
  left: 312px;
  top: 124px;
  width: 142px;
  height: 215px;
  border: 1px solid #c6c6c6;
  background: #fff;
  box-shadow: 1px 2px 3px rgba(0, 0, 0, .15);
}
.menu h4 {
  margin: 0;
  height: 22px;
  padding-left: 9px;
  background: #eaeaea;
  color: #555;
  font-size: 12px;
  line-height: 21px;
  font-weight: 500;
}
.mrow {
  display: flex;
  height: 30px;
}
.mrow button {
  display: grid;
  place-items: center;
  width: 30px;
  height: 30px;
}
.mrow button:first-child {
  margin-left: 1px;
}
.mrow .active {
  background: #c6c6c6;
}
.special {
  display: block;
  width: 100%;
  height: 27px;
  padding: 0 0 0 32px;
  border-top: 1px solid #e1e1e1;
  color: #666;
  text-align: left;
}
.tip {
  position: absolute;
  left: 30px;
  top: 199px;
  width: 80px;
  height: 24px;
  border: 1px solid #bbb;
  background: #fff;
  color: #555;
  line-height: 22px;
  text-align: center;
  white-space: nowrap;
  box-shadow: 1px 1px 2px rgba(0, 0, 0, .2);
}
.pointer {
  position: absolute;
  left: 43px;
  top: 171px;
}
</style>
